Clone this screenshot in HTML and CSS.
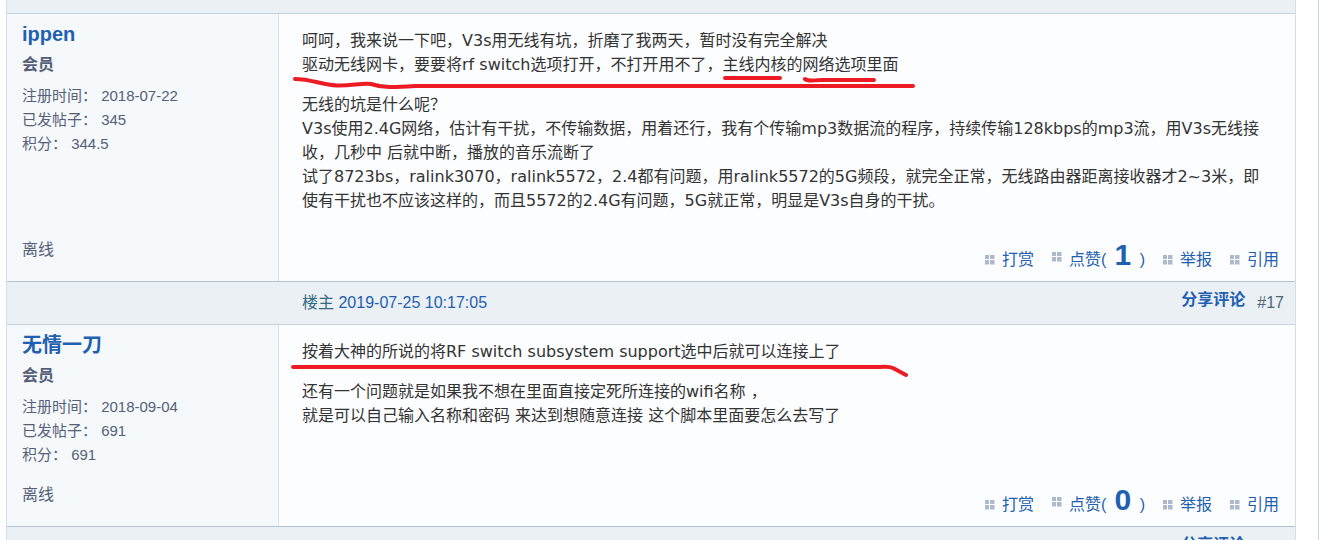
FILE: index.html
```html
<!DOCTYPE html>
<html lang="zh-CN">
<head>
<meta charset="utf-8">
<meta name="viewport" content="width=device-width, initial-scale=1">
<title>V3s 无线网卡</title>
<link rel="stylesheet" href="styles.css">
</head>
<body>
<svg class="symbols" aria-hidden="true">
  <symbol id="grid" viewBox="0 0 10 10">
    <path fill="#d5dce6" d="M0 0h4v4H0zM5 0h5v4H5zM0 5h4v5H0zM5 5h5v5H5z"/>
    <path fill="#aebacb" d="M0 0h4v4H0zM5 0h4v4H5zM0 5h4v4H0zM5 5h4v4H5z"/>
  </symbol>
</svg>
<div class="page">
  <main class="topic">
    <div class="post-head post-head-cut"></div>

    <article class="post">
      <aside class="author">
        <a class="name" href="#ippen">ippen</a>
        <strong class="rank">会员</strong>
        <ul class="stats">
          <li>注册时间： 2018-07-22</li>
          <li>已发帖子： 345</li>
          <li>积分： 344.5</li>
        </ul>
        <span class="status">离线</span>
      </aside>
      <section class="body">
        <div class="message">
          <p>呵呵，我来说一下吧，V3s用无线有坑，折磨了我两天，暂时没有完全解决<br>驱动无线网卡，要要将rf switch选项打开，不打开用不了，主线内核的网络选项里面</p>
          <p>无线的坑是什么呢？<br>V3s使用2.4G网络，估计有干扰，不传输数据，用着还行，我有个传输mp3数据流的程序，持续传输128kbps的mp3流，用V3s无线接收，几秒中 后就中断，播放的音乐流断了<br>试了8723bs，ralink3070，ralink5572，2.4都有问题，用ralink5572的5G频段，就完全正常，无线路由器距离接收器才2~3米，即使有干扰也不应该这样的，而且5572的2.4G有问题，5G就正常，明显是V3s自身的干扰。</p>
        </div>
        <nav class="actions">
          <a href="#tip"><svg class="icon"><use href="#grid"/></svg>打赏</a>
          <a href="#like"><svg class="icon icon-high"><use href="#grid"/></svg>点赞(<b class="count"> 1 </b>)</a>
          <a href="#report"><svg class="icon"><use href="#grid"/></svg>举报</a>
          <a href="#quote"><svg class="icon"><use href="#grid"/></svg>引用</a>
        </nav>
        <svg class="marks" width="660" height="90" aria-hidden="true">
          <path d="M16 65C33 65 42 71 58 71.500C72 72 82 69 92 70C104 74 114 73.500 136 72H634M446 64H501M526 65C529 68 535 66 543 66H595"/>
        </svg>
      </section>
    </article>

    <header class="post-head">
      <div class="posted"><span>楼主</span> <a href="#p17">2019-07-25 10:17:05</a></div>
      <a class="share" href="#share">分享评论</a>
      <span class="number">#17</span>
    </header>
    <article class="post">
      <aside class="author">
        <a class="name" href="#user">无情一刀</a>
        <strong class="rank">会员</strong>
        <ul class="stats">
          <li>注册时间： 2018-09-04</li>
          <li>已发帖子： 691</li>
          <li>积分： 691</li>
        </ul>
        <span class="status">离线</span>
      </aside>
      <section class="body">
        <div class="message">
          <p>按着大神的所说的将RF switch subsystem support选中后就可以连接上了</p>
          <p>还有一个问题就是如果我不想在里面直接定死所连接的wifi名称 ，<br>就是可以自己输入名称和密码 来达到想随意连接 这个脚本里面要怎么去写了</p>
        </div>
        <nav class="actions">
          <a href="#tip2"><svg class="icon"><use href="#grid"/></svg>打赏</a>
          <a href="#like2"><svg class="icon icon-high"><use href="#grid"/></svg>点赞(<b class="count"> 0 </b>)</a>
          <a href="#report2"><svg class="icon"><use href="#grid"/></svg>举报</a>
          <a href="#quote2"><svg class="icon"><use href="#grid"/></svg>引用</a>
        </nav>
        <svg class="marks" width="660" height="90" aria-hidden="true">
          <path d="M14 42H600Q610 41 614 43L627 50"/>
        </svg>
      </section>
    </article>

    <header class="post-head">
      <div class="posted"></div>
      <a class="share" href="#share2">分享评论</a>
      <span class="number">#18</span>
    </header>
  </main>
</div>
</body>
</html>
```
FILE: styles.css
```css
* {
  box-sizing: border-box;
}

body {
  margin: 0;
  height: 100vh;
  overflow: hidden;
  background: #fff;
  color: #333;
  font: 16px/24px "Liberation Sans", "Noto Sans CJK SC", sans-serif;
}

a {
  color: #1f60b0;
  text-decoration: none;
}

.symbols {
  display: none;
}

.page {
  min-height: 100vh;
  padding: 0 22px 0 6px;
  border-right: 1px solid #c8d6e1;
}

.topic {
  border: solid #d3dee7;
  border-width: 0 1px;
  background: #fcfdff;
}

.post-head {
  display: flex;
  gap: 12px;
  height: 43px;
  padding: 6px 11px 0 295px;
  background: #ebf0f4;
  border-bottom: 1px solid #c6d4df;
}

.post-head-cut {
  height: 14px;
}

.posted {
  flex: 1;
  padding-top: 3px;
  color: #346b82;
}

.share {
  font-weight: bold;
}

.number {
  padding-top: 3px;
  color: #4e6874;
}

.post {
  display: flex;
  border-bottom: 1px solid #b5c4d0;
}

.author {
  display: flex;
  flex-direction: column;
  flex: 0 0 272px;
  padding: 4px 15px 19px;
  color: #556078;
  background: #f5f9fc;
  border-right: 1px solid #d6e1e9;
}

.name {
  font-size: 20px;
  line-height: 32px;
  font-weight: bold;
}

.rank {
  margin: 3px 0 7px;
}

.stats {
  margin: 0;
  padding: 0 0 16px;
  list-style: none;
  font-size: 15px;
}

.status {
  margin-top: auto;
}

.body {
  position: relative;
  display: flex;
  flex-direction: column;
  flex: 1;
  min-width: 0;
  padding: 15px 16px 6px 23px;
}

.message {
  padding: 0 5px 6px 0;
  font-family: "DejaVu Sans", "Noto Sans CJK SC", sans-serif;
}

.message p {
  margin: 0 0 16px;
}

.actions {
  display: flex;
  justify-content: flex-end;
  align-items: baseline;
  gap: 18px;
  margin-top: auto;
}

.icon {
  width: 10px;
  height: 10px;
  margin-right: 7px;
}

.icon-high {
  margin-bottom: 3px;
}

.count {
  font-size: 30px;
  line-height: 40px;
  white-space: pre;
}

.marks {
  position: absolute;
  top: 0;
  left: 0;
  fill: none;
  stroke: #ed1c24;
  stroke-width: 4;
  stroke-linecap: round;
  stroke-linejoin: round;
  pointer-events: none;
}
```
